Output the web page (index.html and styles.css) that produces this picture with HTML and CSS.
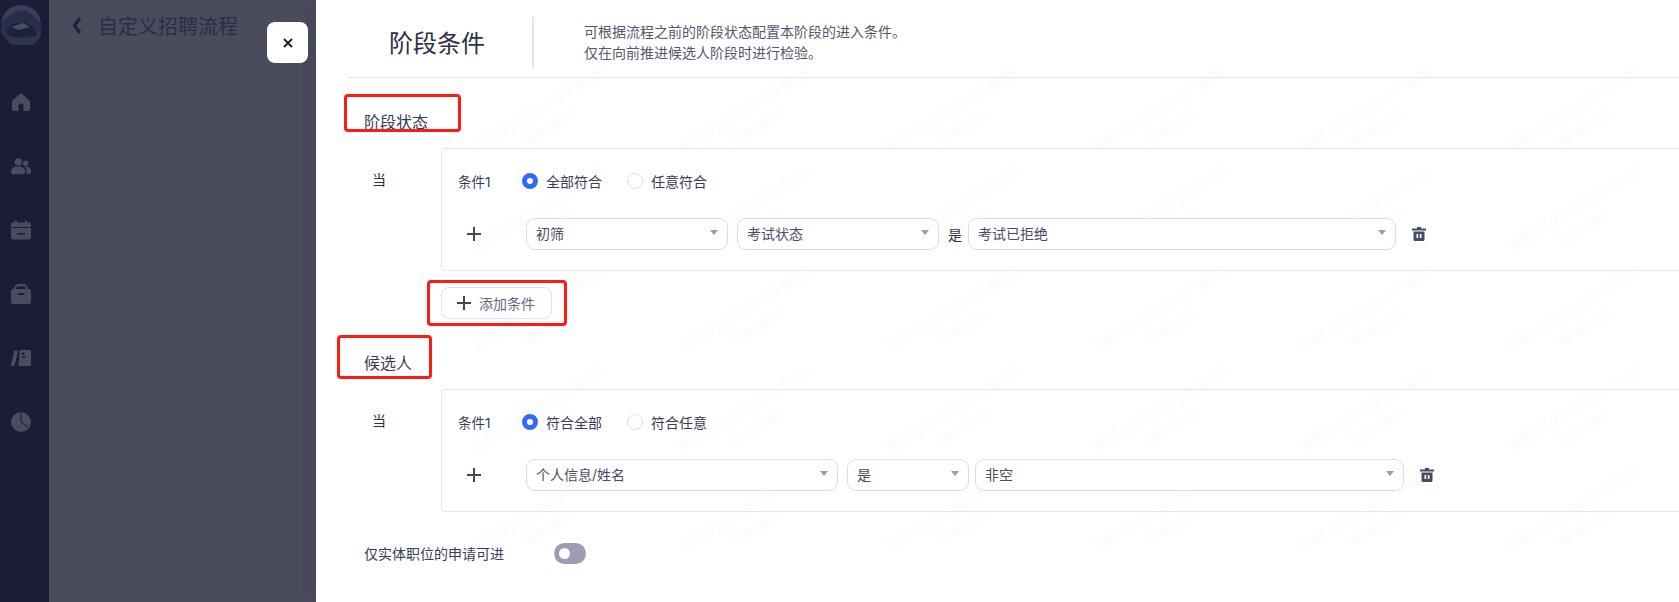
FILE: index.html
```html
<!DOCTYPE html>
<html lang="zh-CN">
<head>
    <meta charset="UTF-8">
    <title>阶段条件</title>
    <link rel="stylesheet" href="styles.css">
</head>
<body>
    <div class="app">
        <nav class="sidebar">
            <svg class="avatar" viewBox="0 0 40 40">
                <circle cx="20" cy="20" r="20" fill="#3a3e5c"/>
                <path d="M0 17 L8 11 L16 6 L24 5 L32 10 L40 18 V27 H0 Z" fill="#292c4a"/>
                <path d="M0 27 H40 V30 A20 20 0 0 1 3 31 Z" fill="#30334f"/>
                <path d="M5 25 L12 19 L24 17 L33 23 L36 31 L16 33 L6 30 Z" fill="#1f2138"/>
                <path d="M11 22 L22 18 L29 22 L17 25 Z" fill="#4a4e6a"/>
            </svg>
            <a class="nav-icon"><svg viewBox="0 0 20 20"><path d="M10 1 L19 9 V17 a2 2 0 0 1-2 2 H12.500 V14 a2.500 2.500 0 0 0-5 0 V19 H3 a2 2 0 0 1-2-2 V9 Z"/></svg></a>
            <a class="nav-icon"><svg viewBox="0 0 22 18"><circle cx="8" cy="4.500" r="4"/><circle cx="16" cy="6" r="3"/><path d="M0 16 c0-5 3-6.500 8-6.500 s7.500 1.500 7.500 6.500 a2 2 0 0 1-2 2 H2 a2 2 0 0 1-2-2 Z"/><path d="M17 17.500 V14 c0-2-.8-3.200-2-4 c4-.5 7 1 7 5 a2.500 2.500 0 0 1-2.500 2.500 Z"/></svg></a>
            <a class="nav-icon"><svg viewBox="0 0 20 19"><path d="M4 0 h2 v2 h8 v-2 h2 v2 h2 a2 2 0 0 1 2 2 v2.500 H0 V4 a2 2 0 0 1 2-2 h2 Z"/><path fill-rule="evenodd" d="M0 7.500 H20 V17 a2 2 0 0 1-2 2 H2 a2 2 0 0 1-2-2 Z M6 12.500 v1.500 h8 v-1.500 Z"/></svg></a>
            <a class="nav-icon"><svg viewBox="0 0 18 18"><path d="M3 4 C3 1.500 5 0 7 0 h4 c2 0 4 1.500 4 4 v1 H13.500 V4 c0-1-.8-2-2.500-2 H7 C5.300 2 4.500 3 4.500 4 v1 H3 Z"/><path fill-rule="evenodd" d="M2 4.500 H16 a2 2 0 0 1 2 2 V16 a2 2 0 0 1-2 2 H2 a2 2 0 0 1-2-2 V6.500 a2 2 0 0 1 2-2 Z M6 8 v2 h6 V8 Z"/></svg></a>
            <a class="nav-icon"><svg viewBox="0 0 21 17"><path d="M3.500 0.500 H7.500 L3.800 16 a1 1 0 0 1-1 1 H1 a1 1 0 0 1-1-1.200 Z"/><path fill-rule="evenodd" d="M9.500 0 H20 a1 1 0 0 1 1 1 V16 a1 1 0 0 1-1 1 H9 a1 1 0 0 1-1-1 L9 1 Z M11.500 3 v2 h2.500 V3 Z M11.500 7 v1.500 h4 V7 Z"/></svg></a>
            <a class="nav-icon"><svg viewBox="0 0 20 20"><circle cx="10" cy="10" r="10"/><path d="M10 0 V10 L17 15" fill="none" stroke="#1a1c38" stroke-width="1"/></svg></a>
        </nav>

        <div class="backdrop">
            <header class="back-header">
                <svg class="chevron" viewBox="0 0 10 19"><path d="M8 2 L2.500 9.500 L8 17" fill="none" stroke="#1c1f3e" stroke-width="3"/></svg>
                <span>自定义招聘流程</span>
            </header>
        </div>

        <main class="drawer">
            <div class="watermarks" id="watermarks"></div>

            <button class="close-btn"><svg viewBox="0 0 10 10"><path d="M1 1 L9 9 M9 1 L1 9" stroke="#1e2038" stroke-width="2"/></svg></button>

            <header class="drawer-header">
                <h1>阶段条件</h1>
                <p>可根据流程之前的阶段状态配置本阶段的进入条件。<br>仅在向前推进候选人阶段时进行检验。</p>
            </header>

            <section class="section section-status">
                <h2>阶段状态</h2>
                <div class="when-row">
                    <span class="when">当</span>
                    <div class="card">
                        <div class="card-top">
                            <span class="cond-name">条件1</span>
                            <label class="radio on">全部符合</label>
                            <label class="radio">任意符合</label>
                        </div>
                        <div class="card-row">
                            <svg class="plus" viewBox="0 0 14 14"><path d="M7 0 V14 M0 7 H14"/></svg>
                            <div class="select sel-stage">初筛</div>
                            <div class="select sel-stage">考试状态</div>
                            <span class="op">是</span>
                            <div class="select sel-value">考试已拒绝</div>
                            <svg class="trash" viewBox="0 0 14 14"><path d="M5 0 h4 v1.500 h5 v2 H0 v-2 h5 Z"/><path fill-rule="evenodd" d="M1.500 4.500 h11 V12.500 a1.500 1.500 0 0 1-1.500 1.500 H3 a1.500 1.500 0 0 1-1.500-1.500 Z M4.500 7 v4 h1.700 V7 Z M7.800 7 v4 h1.700 V7 Z"/></svg>
                        </div>
                    </div>
                </div>
                <button class="add-btn"><svg class="plus" viewBox="0 0 14 14"><path d="M7 0 V14 M0 7 H14"/></svg>添加条件</button>
            </section>

            <section class="section section-person">
                <h2>候选人</h2>
                <div class="when-row">
                    <span class="when">当</span>
                    <div class="card">
                        <div class="card-top">
                            <span class="cond-name">条件1</span>
                            <label class="radio on">符合全部</label>
                            <label class="radio">符合任意</label>
                        </div>
                        <div class="card-row">
                            <svg class="plus" viewBox="0 0 14 14"><path d="M7 0 V14 M0 7 H14"/></svg>
                            <div class="select sel-field">个人信息/姓名</div>
                            <div class="select sel-op">是</div>
                            <div class="select sel-value sel-value-2">非空</div>
                            <svg class="trash" viewBox="0 0 14 14"><path d="M5 0 h4 v1.500 h5 v2 H0 v-2 h5 Z"/><path fill-rule="evenodd" d="M1.500 4.500 h11 V12.500 a1.500 1.500 0 0 1-1.500 1.500 H3 a1.500 1.500 0 0 1-1.500-1.500 Z M4.500 7 v4 h1.700 V7 Z M7.800 7 v4 h1.700 V7 Z"/></svg>
                        </div>
                    </div>
                </div>
                <div class="switch-row">
                    <span class="switch-label">仅实体职位的申请可进</span>
                    <span class="switch"></span>
                </div>
            </section>

            <div class="mark mark-status"></div>
            <div class="mark mark-add"></div>
            <div class="mark mark-person"></div>
        </main>
    </div>
    <script src="watermark.js"></script>
</body>
</html>
```

FILE: styles.css
```css
* {
    box-sizing: border-box;
}
body {
    margin: 0;
    font-family: Inter, "Noto Sans CJK SC", sans-serif;
    font-size: 14px;
    color: #3a3c56;
    background: #fff;
}
.app {
    display: flex;
    height: 602px;
    overflow: hidden;
}

/* left nav, dimmed by the overlay */
.sidebar {
    width: 49px;
    flex: none;
    padding-right: 7px;
    background: #1a1c38;
    display: flex;
    flex-direction: column;
    align-items: center;
}
.avatar {
    width: 40px;
    height: 40px;
    margin-top: 5px;
    margin-bottom: 25px;
}
.nav-icon {
    height: 64px;
    display: flex;
    align-items: center;
    justify-content: center;
}
.nav-icon svg {
    width: 20px;
    height: 20px;
    fill: #4a4c5f;
}

.backdrop {
    width: 267px;
    flex: none;
    background: #4a4c5e;
}
.back-header {
    height: 54px;
    padding-left: 23px;
    padding-bottom: 2px;
    display: flex;
    align-items: center;
    gap: 16px;
    font-size: 20px;
    color: #2a2c46;
    border-bottom: 1px solid #43455a;
}
.chevron {
    width: 10px;
    height: 19px;
}

/* drawer */
.drawer {
    flex: 1;
    min-width: 0;
    position: relative;
    background: #fff;
    box-shadow: -8px 0 18px rgba(0, 0, 0, 0.06);
}
.watermarks {
    position: absolute;
    inset: 0;
    overflow: hidden;
    pointer-events: none;
}
.wm {
    position: absolute;
    width: 207px;
    height: 100px;
    display: flex;
    flex-direction: column;
    align-items: center;
    justify-content: center;
    transform: rotate(-31deg);
    font-size: 14px;
    line-height: 20px;
    white-space: nowrap;
    color: #fafafb;
}
.close-btn {
    position: absolute;
    left: -49px;
    top: 22px;
    width: 41px;
    height: 41px;
    padding: 0;
    border: none;
    border-radius: 8px;
    background: #fff;
    display: flex;
    align-items: center;
    justify-content: center;
}
.close-btn svg {
    width: 10px;
    height: 10px;
}
.drawer-header {
    position: relative;
    height: 78px;
    margin-left: 32px;
    padding-top: 17px;
    display: flex;
    align-items: flex-start;
    border-bottom: 1px solid #e6e6f0;
}
.drawer-header h1 {
    width: 186px;
    height: 51px;
    margin: 0;
    padding-left: 41px;
    font-size: 24px;
    font-weight: 400;
    line-height: 53px;
    color: #2e3048;
    border-right: 2px solid #e2e3ed;
}
.drawer-header p {
    margin: 4px 0 0 50px;
    line-height: 21px;
    color: #55576e;
}

.section {
    position: relative;
    padding-left: 48px;
}
.section h2 {
    margin: 0;
    font-size: 16px;
    font-weight: 400;
    line-height: 22px;
    color: #3a3c56;
}
.section-status {
    padding-top: 33px;
}
.section-person {
    padding-top: 33px;
}
.when-row {
    display: flex;
    margin-top: 15px;
}
.when {
    width: 77px;
    padding-left: 8px;
    padding-top: 22px;
    line-height: 20px;
    color: #2e3048;
}
.card {
    flex: 1;
    height: 123px;
    margin-right: -4px;
    padding: 22px 0 0 16px;
    border: 1px solid #e6e6f0;
    border-radius: 4px;
}
.card-top {
    display: flex;
    align-items: center;
    height: 20px;
}
.cond-name {
    width: 64px;
    font-size: 13.500px;
}
.radio {
    width: 105px;
    display: flex;
    align-items: center;
    gap: 8px;
}
.radio::before {
    content: "";
    box-sizing: border-box;
    width: 16px;
    height: 16px;
    flex: none;
    border: 1px solid #dfe0ea;
    border-radius: 50%;
}
.radio.on::before {
    border: 5px solid #2f6bf6;
}
.card-row {
    display: flex;
    align-items: center;
    height: 32px;
    margin-top: 27px;
}
.plus {
    width: 14px;
    height: 14px;
    flex: none;
    margin: 0 45px 0 9px;
    fill: none;
    stroke: #44465f;
    stroke-width: 2;
}
.select {
    position: relative;
    height: 32px;
    flex: none;
    padding-left: 9px;
    margin-right: 9px;
    line-height: 30px;
    border: 1px solid #dcdce8;
    border-radius: 9px;
    background: #fff;
    color: #4a4c64;
}
.select::after {
    content: "";
    position: absolute;
    right: 9px;
    top: 11px;
    border-style: solid;
    border-width: 5px 4.500px 0;
    border-color: #9a9bb2 transparent transparent;
}
.sel-stage {
    width: 202px;
}
.sel-value {
    width: 428px;
}
.sel-field {
    width: 312px;
}
.sel-op {
    width: 122px;
    margin-right: 6px;
}
.sel-value-2 {
    width: 429px;
}
.op {
    width: 20px;
    color: #2e3048;
}
.trash {
    width: 14px;
    height: 14px;
    flex: none;
    margin-left: 7px;
    fill: #474a66;
}
.add-btn {
    height: 32px;
    width: 111px;
    margin: 16px 0 0 77px;
    padding: 0 0 0 15px;
    display: flex;
    align-items: center;
    font: inherit;
    color: #65677e;
    background: #fff;
    border: 1px solid #dfe0ea;
    border-radius: 8px;
}
.add-btn .plus {
    margin: 0 8px 0 0;
}
.switch-row {
    display: flex;
    align-items: center;
    height: 22px;
    margin-top: 30px;
}
.switch-label {
    width: 190px;
}
.switch {
    position: relative;
    width: 32px;
    height: 21px;
    border-radius: 11px;
    background: #9c9db3;
}
.switch::after {
    content: "";
    position: absolute;
    left: 5px;
    top: 5px;
    width: 11px;
    height: 11px;
    border-radius: 50%;
    background: #fff;
}

/* red annotation boxes from the screenshot */
.mark {
    position: absolute;
    border: 3px solid #fb1d12;
    border-radius: 4px;
    pointer-events: none;
}
.mark-status {
    left: 28px;
    top: 94px;
    width: 117px;
    height: 38px;
}
.mark-add {
    left: 111px;
    top: 280px;
    width: 140px;
    height: 46px;
}
.mark-person {
    left: 21px;
    top: 335px;
    width: 95px;
    height: 44px;
}
```

FILE: watermark.js
```js
// repeating faint watermark behind the drawer content
const box = document.getElementById('watermarks');
for (let row = 0; row < 5; row++) {
    for (let col = 0; col < 6; col++) {
        const item = document.createElement('div');
        item.className = 'wm';
        item.style.left = (col * 207 + 123.5) + 'px';
        item.style.top = (row * 100 + 68) + 'px';
        item.innerHTML = '<span>孙阳 2023-03-20 16:01</span><span>lipanpan</span>';
        box.appendChild(item);
    }
}
```
